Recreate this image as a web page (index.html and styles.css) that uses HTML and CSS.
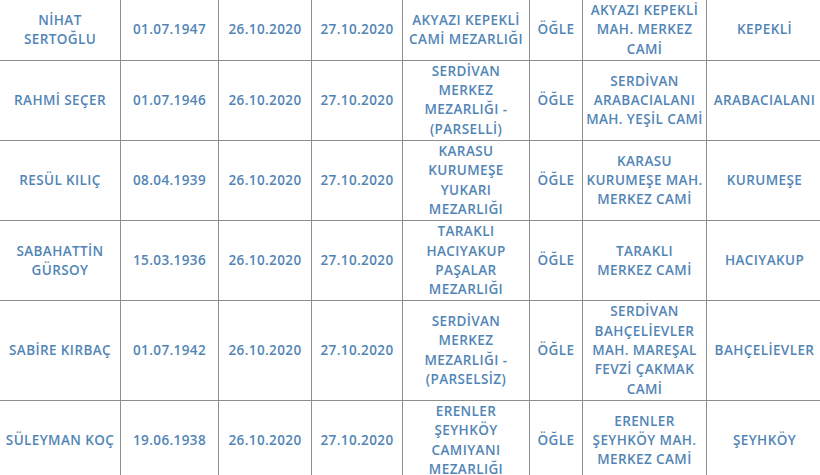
FILE: index.html
```html
<!DOCTYPE html>
<html lang="tr">
<head>
<meta charset="utf-8">
<link rel="stylesheet" href="styles.css">
</head>
<body>
<table class="list">
<colgroup>
<col class="c1"><col class="c2"><col class="c3"><col class="c4"><col class="c5"><col class="c6"><col class="c7"><col class="c8">
</colgroup>
<tbody>
<tr>
<td>NİHAT<br>SERTOĞLU</td><td>01.07.1947</td><td>26.10.2020</td><td>27.10.2020</td><td>AKYAZI KEPEKLİ<br>CAMİ MEZARLIĞI</td><td>ÖĞLE</td><td>AKYAZI KEPEKLİ<br>MAH. MERKEZ<br>CAMİ</td><td>KEPEKLİ</td>
</tr>
<tr>
<td>RAHMİ SEÇER</td><td>01.07.1946</td><td>26.10.2020</td><td>27.10.2020</td><td>SERDİVAN<br>MERKEZ<br>MEZARLIĞI -<br>(PARSELLİ)</td><td>ÖĞLE</td><td>SERDİVAN<br>ARABACIALANI<br>MAH. YEŞİL CAMİ</td><td>ARABACIALANI</td>
</tr>
<tr>
<td>RESÜL KILIÇ</td><td>08.04.1939</td><td>26.10.2020</td><td>27.10.2020</td><td>KARASU<br>KURUMEŞE<br>YUKARI<br>MEZARLIĞI</td><td>ÖĞLE</td><td>KARASU<br>KURUMEŞE MAH.<br>MERKEZ CAMİ</td><td>KURUMEŞE</td>
</tr>
<tr>
<td>SABAHATTİN<br>GÜRSOY</td><td>15.03.1936</td><td>26.10.2020</td><td>27.10.2020</td><td>TARAKLI<br>HACIYAKUP<br>PAŞALAR<br>MEZARLIĞI</td><td>ÖĞLE</td><td>TARAKLI<br>MERKEZ CAMİ</td><td>HACIYAKUP</td>
</tr>
<tr>
<td>SABİRE KIRBAÇ</td><td>01.07.1942</td><td>26.10.2020</td><td>27.10.2020</td><td>SERDİVAN<br>MERKEZ<br>MEZARLIĞI -<br>(PARSELSİZ)</td><td>ÖĞLE</td><td>SERDİVAN<br>BAHÇELİEVLER<br>MAH. MAREŞAL<br>FEVZİ ÇAKMAK<br>CAMİ</td><td>BAHÇELİEVLER</td>
</tr>
<tr>
<td>SÜLEYMAN KOÇ</td><td>19.06.1938</td><td>26.10.2020</td><td>27.10.2020</td><td>ERENLER<br>ŞEYHKÖY<br>CAMIYANI<br>MEZARLIĞI</td><td>ÖĞLE</td><td>ERENLER<br>ŞEYHKÖY MAH.<br>MERKEZ CAMİ</td><td>ŞEYHKÖY</td>
</tr>
</tbody>
</table>
</body>
</html>
```

FILE: styles.css
```css
html, body {
  margin: 0;
  padding: 0;
  background: #ffffff;
  overflow: hidden;
}
.list {
  border-collapse: collapse;
  table-layout: fixed;
  width: 823px;
  margin: -1px 0 0 -1px;
  font-family: "Open Sans", "Liberation Sans", sans-serif;
  font-size: 13.5px;
  font-weight: 600;
  letter-spacing: 0.4px;
  text-transform: uppercase;
  color: #5285b6;
}
.list td {
  border: 1px solid #8f8f8f;
  padding: 1px 0;
  line-height: 19.3px;
  text-align: center;
  vertical-align: middle;
  white-space: nowrap;
  overflow: hidden;
}
.c1 { width: 121px; }
.c2 { width: 98px; }
.c3 { width: 93px; }
.c4 { width: 91px; }
.c5 { width: 127px; }
.c6 { width: 53px; }
.c7 { width: 124px; }
.c8 { width: 116px; }
```
